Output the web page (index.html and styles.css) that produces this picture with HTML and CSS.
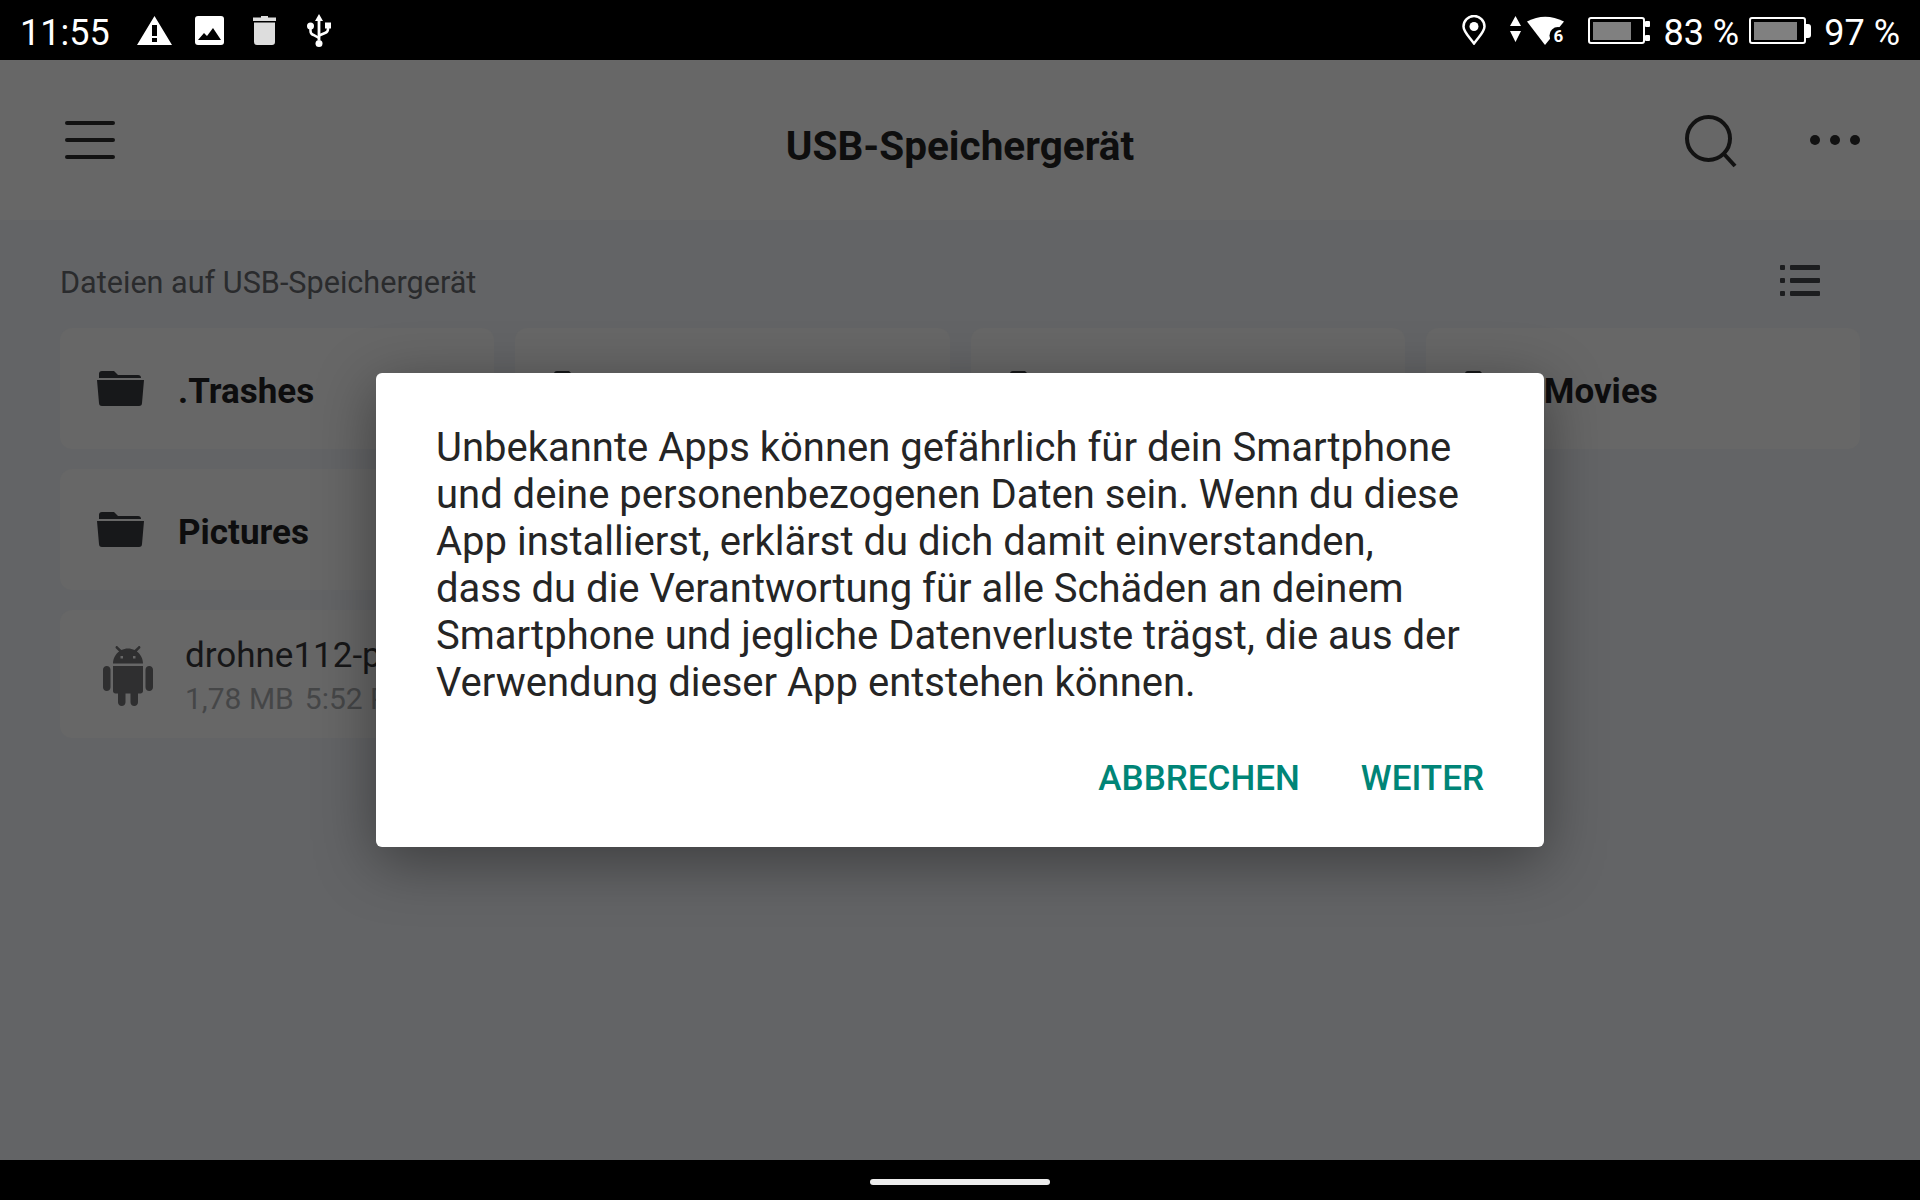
FILE: index.html
```html
<!DOCTYPE html>
<html lang="de">
<head>
    <meta charset="UTF-8">
    <title>USB-Speichergerät</title>
    <link rel="stylesheet" href="styles.css">
</head>
<body>
    <div id="phone">
        <!-- status bar -->
        <div class="status">
            <span class="clock">11:55</span>
            <svg class="ic-warn" viewBox="0 0 35 29"><path fill="#fff" fill-rule="evenodd" d="M17.5 0L35 29H0zM15 9v11h5V9zM15 22v4h5v-4z"/></svg>
            <svg class="ic-image" viewBox="0 0 29 29"><rect width="29" height="29" rx="3" fill="#fff"/><path fill="#000" d="M3 24l6-7 3 3 6-8 8 12z"/></svg>
            <svg class="ic-trash" viewBox="0 0 23 29"><path fill="#ddd" d="M8 0h7v1.500h8V5H0V1.500h8zM1 6.500h21V26q0 3-3 3H4q-3 0-3-3z"/></svg>
            <svg class="ic-usb" viewBox="0 0 24 33"><path fill="#fff" d="M12 0l4 7h-2.600v19h-2.800V7H8z"/><circle cx="12" cy="29.500" r="3.500" fill="#fff"/><circle cx="3.500" cy="12" r="3.500" fill="#fff"/><rect x="18" y="8.500" width="6" height="6" fill="#fff"/><path fill="none" stroke="#fff" stroke-width="2.500" d="M3.500 12v5q0 3 3 4l5.500 3M21 13v2q0 3-3 4l-6 2.500"/></svg>

            <svg class="ic-pin" viewBox="0 0 24 30"><path fill="none" stroke="#fff" stroke-width="2.500" d="M12 28.500C6 20.500 1.500 16.500 1.500 11.500a10.500 10.500 0 0 1 21 0C22.500 16.500 18 20.500 12 28.500z"/><circle cx="12" cy="11.500" r="4.500" fill="#fff"/></svg>
            <svg class="ic-arrows" viewBox="0 0 11 26"><path fill="#fff" d="M5.500 0L11 10H0zM0 15h11L5.500 26z"/></svg>
            <svg class="ic-wifi" viewBox="0 0 38 30"><path fill="#fff" d="M0 6.500Q18-3 37 6.500L18 30z"/><circle cx="31" cy="20.500" r="8.500" fill="#000"/><text x="31.500" y="26.500" class="wifi-num">6</text></svg>
            <svg class="ic-batt" viewBox="0 0 62 27"><rect x="1" y="1" width="55" height="25" rx="2" fill="none" stroke="#fff" stroke-width="2"/><rect x="5" y="5" width="38" height="18" fill="#808080"/><rect x="57" y="4" width="5" height="6" rx="1" fill="#fff"/><rect x="57" y="18" width="5" height="6" rx="1" fill="#fff"/></svg>
            <span class="pct pct-first">83 %</span>
            <svg class="ic-batt ic-batt2" viewBox="0 0 62 27"><rect x="1" y="1" width="55" height="25" rx="2" fill="none" stroke="#fff" stroke-width="2"/><rect x="5" y="5" width="43" height="18" fill="#808080"/><path fill="#fff" d="M57 7h2q3 0 3 3v8q0 3-3 3h-2z"/></svg>
            <span class="pct">97 %</span>
        </div>

        <div class="main">
            <div class="appbar">
                <div class="burger"><i></i><i></i><i></i></div>
                <div class="title">USB-Speichergerät</div>
                <svg class="ic-search" viewBox="0 0 52 54"><circle cx="23.500" cy="23.500" r="21.500" fill="none" stroke="#121212" stroke-width="4"/><path fill="none" stroke="#121212" stroke-width="4" d="M39 39l11 12"/></svg>
                <div class="more"><i></i><i></i><i></i></div>
            </div>

            <div class="content">
                <div class="head">
                    <span class="head-text">Dateien auf USB-Speichergerät</span>
                    <div class="listicon">
                        <div><i></i><b></b></div>
                        <div><i></i><b></b></div>
                        <div><i></i><b></b></div>
                    </div>
                </div>

                <div class="grid">
                    <div class="card">
                        <svg class="folder" viewBox="0 0 47 35"><use href="#folder"/></svg>
                        <span class="name">.Trashes</span>
                    </div>
                    <div class="card">
                        <svg class="folder" viewBox="0 0 47 35"><use href="#folder"/></svg>
                    </div>
                    <div class="card">
                        <svg class="folder" viewBox="0 0 47 35"><use href="#folder"/></svg>
                    </div>
                    <div class="card">
                        <svg class="folder" viewBox="0 0 47 35"><use href="#folder"/></svg>
                        <span class="name">Movies</span>
                    </div>
                    <div class="card">
                        <svg class="folder" viewBox="0 0 47 35"><use href="#folder"/></svg>
                        <span class="name">Pictures</span>
                    </div>
                    <div class="card"></div>
                    <div class="spacer"></div>
                    <div class="spacer"></div>
                    <div class="card card-file">
                        <svg class="android" viewBox="0 0 24 24"><path fill="#2f2f30" d="M6 18c0 .55.45 1 1 1h1v3.500c0 .83.67 1.500 1.500 1.500s1.500-.67 1.500-1.500V19h2v3.500c0 .83.67 1.500 1.500 1.500s1.500-.67 1.500-1.500V19h1c.55 0 1-.45 1-1V8H6v10zM3.500 8C2.670 8 2 8.670 2 9.500v7c0 .83.67 1.500 1.500 1.500S5 17.330 5 16.500v-7C5 8.670 4.330 8 3.500 8zm17 0c-.83 0-1.500.67-1.500 1.500v7c0 .83.67 1.500 1.500 1.500s1.500-.67 1.500-1.500v-7c0-.83-.67-1.500-1.500-1.500zm-4.970-5.840l1.300-1.300c.2-.2.2-.51 0-.71-.2-.2-.51-.2-.71 0l-1.480 1.480C13.850 1.230 12.950 1 12 1c-.96 0-1.860.23-2.660.63L7.850.15c-.2-.2-.51-.2-.71 0-.2.2-.2.51 0 .71l1.310 1.310C6.970 3.260 6 5.010 6 7h12c0-1.990-.97-3.750-2.470-4.840zM10 5H9V4h1v1zm5 0h-1V4h1v1z"/></svg>
                        <div class="fileinfo">
                            <div class="filename">drohne112-p</div>
                            <div class="filemeta"><span>1,78 MB</span><span>5:52 PM</span></div>
                        </div>
                    </div>
                </div>
            </div>

            <!-- dialog over the list -->
            <div class="overlay">
                <div class="dialog">
                    <p>Unbekannte Apps können gefährlich für dein Smartphone und deine personenbezogenen Daten sein. Wenn du diese App installierst, erklärst du dich damit einverstanden, dass du die Verantwortung für alle Schäden an deinem Smartphone und jegliche Datenverluste trägst, die aus der Verwendung dieser App entstehen können.</p>
                    <div class="buttons">
                        <span>ABBRECHEN</span>
                        <span>WEITER</span>
                    </div>
                </div>
            </div>
        </div>

        <div class="navbar"><div class="pill"></div></div>
    </div>

    <svg class="defs" width="0" height="0">
        <symbol id="folder" viewBox="0 0 47 35">
            <path fill="#17181a" d="M2 7V3q0-3 3-3h12l4 4h20q3 0 3 3z"/>
            <path fill="#17181a" d="M0 9h47l-2 23q0 3-3 3H5q-3 0-3-3z"/>
        </symbol>
    </svg>
</body>
</html>
```

FILE: styles.css
```css
*{
    margin: 0;
    padding: 0;
    box-sizing: border-box;
}
body{
    background-color: #000;
    font-family: Roboto, "Liberation Sans", sans-serif;
    overflow: hidden;
}
#phone{
    width: 1920px;
    height: 1200px;
    display: flex;
    flex-direction: column;
}
.defs{
    display: block;
    height: 0;
}

/* status bar */
.status{
    height: 60px;
    flex: none;
    background-color: #000;
    color: #fff;
    display: flex;
    align-items: center;
    padding: 0 20px 0 20px;
}
.status svg{
    flex: none;
    display: block;
}
.clock{
    font-size: 36px;
    width: 86px;
    margin-top: 5px;
}
.ic-warn{
    width: 35px;
    height: 29px;
    margin-left: 31px;
}
.ic-image{
    width: 29px;
    height: 29px;
    margin-left: 23px;
}
.ic-trash{
    width: 23px;
    height: 29px;
    margin-left: 29px;
}
.ic-usb{
    width: 24px;
    height: 33px;
    margin-left: 31px;
}
.ic-pin{
    width: 24px;
    height: 30px;
    margin-left: auto;
}
.ic-arrows{
    width: 11px;
    height: 26px;
    margin-left: 24px;
    margin-top: -2px;
}
.ic-wifi{
    width: 38px;
    height: 30px;
    margin-left: 6px;
}
.wifi-num{
    font-size: 17px;
    font-weight: 700;
    fill: #fff;
    text-anchor: middle;
}
.ic-batt{
    width: 62px;
    height: 27px;
    margin-left: 23px;
}
.ic-batt2{
    margin-left: 10px;
}
.pct{
    font-size: 36px;
    margin-left: 13px;
    margin-top: 5px;
    white-space: nowrap;
}

.main{
    flex: 1;
    position: relative;
    display: flex;
    flex-direction: column;
    min-height: 0;
}

/* app bar */
.appbar{
    height: 160px;
    flex: none;
    background-color: #676767;
    display: flex;
    align-items: center;
    padding: 0 60px 0 65px;
    position: relative;
}
.burger{
    width: 50px;
    display: flex;
    flex-direction: column;
    gap: 13px;
}
.burger i{
    display: block;
    height: 4px;
    border-radius: 2px;
    background-color: #121212;
}
.title{
    flex: 1;
    text-align: center;
    font-size: 40.5px;
    font-weight: 700;
    color: #0e0e0e;
    margin-top: 12px;
    padding-left: 120px;
}
.ic-search{
    width: 52px;
    height: 54px;
    margin-right: 73px;
    margin-top: 4px;
}
.more{
    display: flex;
    gap: 10px;
}
.more i{
    width: 10px;
    height: 10px;
    border-radius: 50%;
    background-color: #121212;
}

/* list */
.content{
    flex: 1;
    background-color: #636466;
    padding: 0 60px;
}
.head{
    height: 108px;
    display: flex;
    align-items: center;
    justify-content: space-between;
    font-size: 30.6px;
    color: #2a2b2d;
    padding: 12px 40px 0 0;
}
.head-text{
    margin-top: 4px;
}
.listicon{
    width: 40px;
    display: flex;
    flex-direction: column;
    gap: 8px;
}
.listicon div{
    display: flex;
    gap: 5px;
    height: 5px;
}
.listicon i{
    width: 5px;
    border-radius: 1px;
    background-color: #1c1d1f;
}
.listicon b{
    flex: 1;
    border-radius: 1px;
    background-color: #1c1d1f;
}
.grid{
    display: grid;
    grid-template-columns: repeat(4, 1fr);
    grid-auto-rows: 121px;
    gap: 20px 21px;
}
.card{
    background-color: #676767;
    border-radius: 12px;
    display: flex;
    align-items: center;
    padding-left: 37px;
    min-width: 0;
}
.folder{
    width: 47px;
    height: 35px;
    flex: none;
    margin-right: 34px;
}
.name{
    font-size: 35px;
    font-weight: 700;
    color: #0d0d0e;
    margin-top: 5px;
}
.card-file{
    height: 128px;
    padding: 3px 0 0 38px;
}
.android{
    width: 60px;
    height: 60px;
    flex: none;
    margin-right: 27px;
}
.filename{
    font-size: 35px;
    color: #161617;
    white-space: nowrap;
}
.filemeta{
    font-size: 30px;
    color: #454647;
    display: flex;
    gap: 11px;
    white-space: nowrap;
    margin-top: 5px;
}

/* dialog */
.overlay{
    position: absolute;
    top: 0;
    right: 0;
    bottom: 0;
    left: 0;
    display: flex;
    align-items: center;
    justify-content: center;
}
.dialog{
    width: 1168px;
    height: 474px;
    background-color: #fff;
    border-radius: 6px;
    padding: 51px 60px 0;
    box-shadow: 0 14px 60px rgba(0, 0, 0, .4);
}
.dialog p{
    font-size: 40px;
    line-height: 47px;
    color: #252525;
    margin-right: 20px;
}
.buttons{
    display: flex;
    justify-content: flex-end;
    gap: 61px;
    margin-top: 51px;
    font-size: 35px;
    font-weight: 500;
    line-height: 44px;
    color: #008577;
}

/* nav */
.navbar{
    height: 40px;
    flex: none;
    background-color: #000;
    display: flex;
    justify-content: center;
    padding-top: 19px;
}
.pill{
    width: 180px;
    height: 6px;
    border-radius: 3px;
    background-color: #ececec;
}
```
